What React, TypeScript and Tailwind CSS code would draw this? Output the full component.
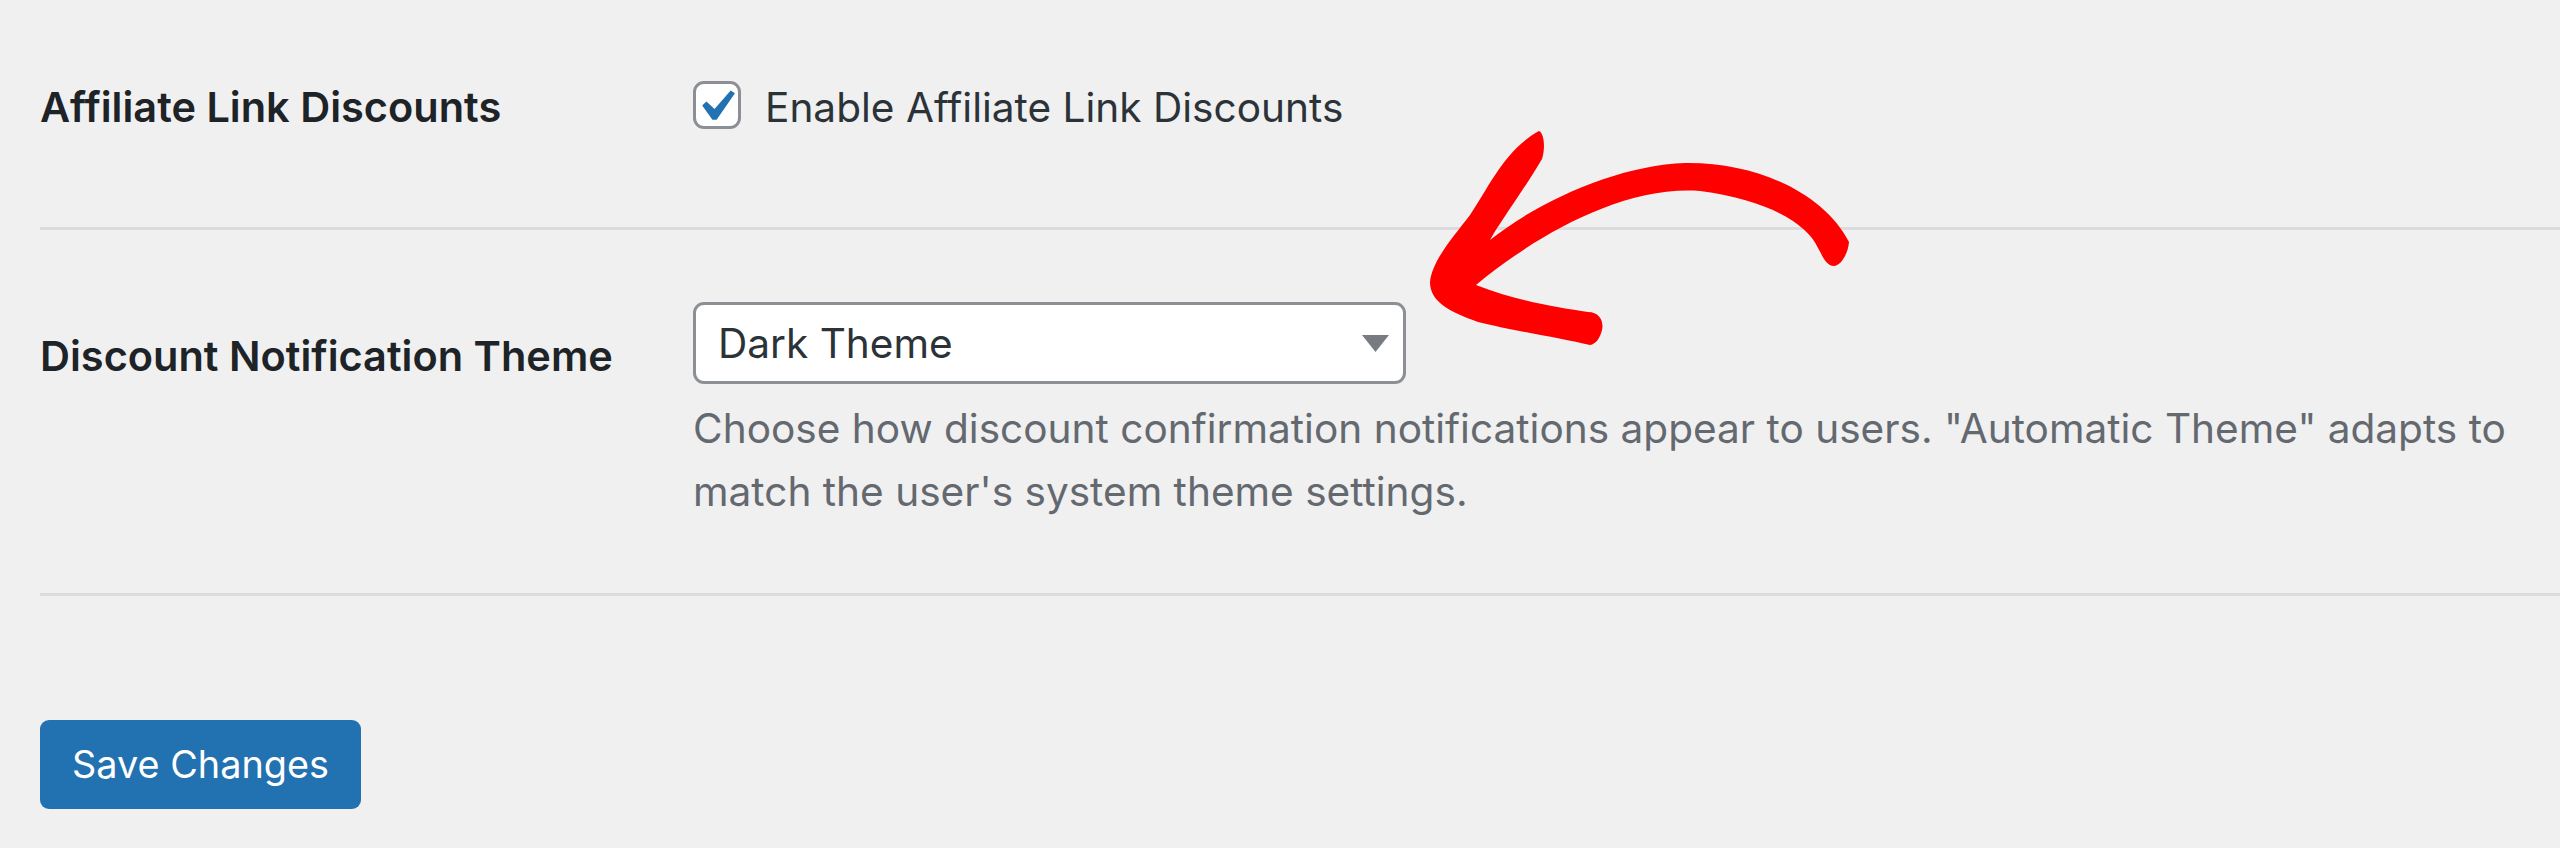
import React from "react";

const font = { fontFamily: "Inter, 'Noto Sans', sans-serif" };

const CheckMark = () => (
  <svg
    viewBox="0 0 20 20"
    className="absolute left-[-12px] top-[-9px] h-[63px] w-[63px]"
  >
    <path
      d="M14.83 4.89l1.34.94-5.81 8.38H9.02L5.78 9.67l1.34-1.25 2.57 2.4z"
      fill="#2271b1"
    />
  </svg>
);

const Arrow = () => (
  <svg
    className="pointer-events-none absolute inset-0 h-[848px] w-[2560px]"
    viewBox="0 0 2560 848"
  >
    <path
      fill="#ff0000"
      d="M 1539 131
         C 1545 134, 1545 150, 1542 159
         C 1525 188, 1500 222, 1490 240
         C 1540 200, 1620 165, 1685 163
         C 1760 162, 1825 195, 1849 242
         C 1848 255, 1840 266, 1834 266
         C 1826 266, 1822 255, 1818 248
         C 1808 225, 1770 200, 1700 191
         C 1620 185, 1530 240, 1476 285
         C 1520 302, 1560 308, 1588 312
         C 1600 312, 1604 322, 1602 330
         C 1600 338, 1596 344, 1590 345
         C 1560 338, 1510 330, 1478 322
         C 1450 312, 1430 302, 1430 282
         C 1432 260, 1455 235, 1470 215
         C 1490 185, 1505 150, 1539 131 Z"
    />
  </svg>
);

export default function App() {
  return (
    <div
      className="relative h-[848px] w-full overflow-hidden bg-[#f0f0f1] pl-[40px]"
      style={font}
    >
      {/* Affiliate link row */}
      <div className="flex h-[227px] items-start pt-[81px]">
        <div className="mt-[2px] w-[653px] text-[41.5px] leading-[48px] font-semibold text-[#1d2327]">
          Affiliate Link Discounts
        </div>
        <label className="flex items-start">
          <span className="relative h-[48px] w-[48px] rounded-[11px] border-[3px] border-[#8c8f94] bg-white">
            <CheckMark />
          </span>
          <span className="ml-[24px] mt-[3px] text-[40.6px] leading-[48px] text-[#2c3338]">
            Enable Affiliate Link Discounts
          </span>
        </label>
      </div>

      <div className="h-[3px] bg-[#dcdcde]" />

      {/* Theme row */}
      <div className="flex h-[363px] items-start pt-[72px]">
        <div className="mt-[30px] w-[653px] text-[41.5px] leading-[48px] font-semibold text-[#1d2327]">
          Discount Notification Theme
        </div>
        <div className="flex flex-col">
          <div className="flex h-[82px] w-[713px] items-center justify-between rounded-[11px] border-[3px] border-[#8c8f94] bg-white pl-[22px] pr-[14px]">
            <span className="pt-[2px] text-[40.6px] leading-[48px] text-[#2c3338]">
              Dark Theme
            </span>
            <svg viewBox="0 0 27 17" className="h-[17px] w-[27px]">
              <polygon points="0,0 27,0 13.5,17" fill="#787c82" />
            </svg>
          </div>
          <p className="mt-[13px] text-[40.6px] leading-[63px] text-[#646970]">
            Choose how discount confirmation notifications appear to users.
            "Automatic Theme" adapts to
            <br />
            match the user's system theme settings.
          </p>
        </div>
      </div>

      <div className="h-[3px] bg-[#dcdcde]" />

      <div className="pt-[124px]">
        <button className="flex h-[89px] w-[321px] items-center justify-center rounded-[9px] bg-[#2271b1] text-[37.8px] text-white">
          Save Changes
        </button>
      </div>

      <Arrow />
    </div>
  );
}
